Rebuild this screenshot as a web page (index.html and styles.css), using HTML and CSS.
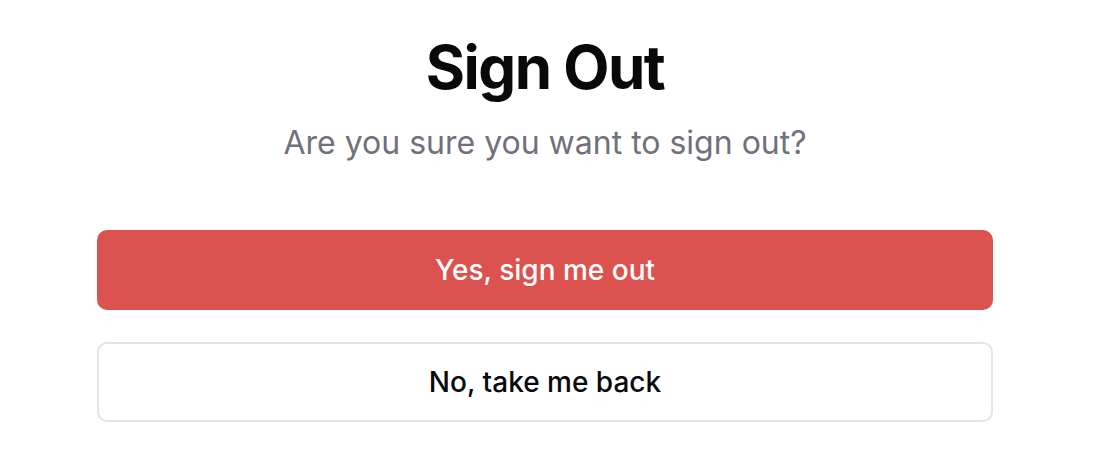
FILE: index.html
```html
<!DOCTYPE html>
<html>
<head>
<meta charset="utf-8">
<link rel="stylesheet" href="styles.css">
</head>
<body>
<main class="wrap">
  <header class="head">
    <h1 class="title">Sign Out</h1>
    <p class="sub">Are you sure you want to sign out?</p>
  </header>
  <div class="actions">
    <button class="btn btn-danger">Yes, sign me out</button>
    <button class="btn btn-outline">No, take me back</button>
  </div>
</main>
</body>
</html>
```
FILE: styles.css
```css
html, body {
  margin: 0;
  padding: 0;
  background: #ffffff;
}
body {
  font-family: Inter, "Noto Sans", sans-serif;
  padding-right: 4px;
}
.wrap {
  width: 896px;
  margin: 0 auto;
  padding-top: 29px;
  display: flex;
  flex-direction: column;
}
.head {
  display: flex;
  flex-direction: column;
  align-items: center;
}
.title {
  margin: 0;
  font-size: 60px;
  line-height: 76px;
  font-weight: 700;
  letter-spacing: -0.025em;
  color: #09090b;
}
.sub {
  margin: 18px 0 0;
  font-size: 32px;
  line-height: 40px;
  color: #71717a;
}
.actions {
  margin-top: 67px;
  display: flex;
  flex-direction: column;
  gap: 32px;
}
.btn {
  height: 80px;
  border-radius: 10px;
  font-family: Inter, "Noto Sans", sans-serif;
  font-size: 28px;
  font-weight: 500;
  cursor: pointer;
}
.btn-danger {
  background: #dc524e;
  color: #ffffff;
  border: none;
}
.btn-outline {
  background: #ffffff;
  color: #09090b;
  border: 2px solid #e4e4e7;
}
```
